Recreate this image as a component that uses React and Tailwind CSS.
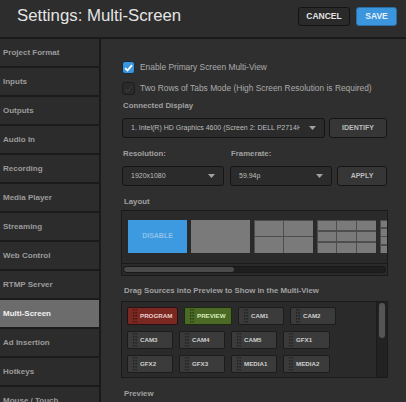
import React from "react";

const F = { fontFamily: '"Liberation Sans", Arial, sans-serif' };

const sideItems = [
  "Project Format",
  "Inputs",
  "Outputs",
  "Audio In",
  "Recording",
  "Media Player",
  "Streaming",
  "Web Control",
  "RTMP Server",
  "Multi-Screen",
  "Ad Insertion",
  "Hotkeys",
  "Mouse / Touch",
];

function Arrow() {
  return (
    <svg width="7" height="4" viewBox="0 0 7 4" className="shrink-0">
      <path d="M0 0 L7 0 L3.5 4 Z" fill="#a0a0a0" />
    </svg>
  );
}

function Handle() {
  const dots = [];
  for (let r = 0; r < 5; r++) {
    for (let c = 0; c < 2; c++) {
      dots.push(<rect key={r + "-" + c} x={c * 2.5} y={r * 3} width="1.3" height="1.6" fill="rgba(0,0,0,0.45)" />);
    }
  }
  return (
    <svg width="4" height="14" viewBox="0 0 4 14" className="shrink-0">
      {dots}
    </svg>
  );
}

function Src({ label, w, kind }) {
  let cls = "bg-[#3b3b3b] border-[#1c1c1c] text-[#cfcfcf]";
  if (kind === "red") cls = "bg-[#7b2822] border-[#2a1010] text-[#ecd0cc]";
  if (kind === "green") cls = "bg-[#4a6a26] border-[#1c2a10] text-[#d6ebb8]";
  return (
    <div className={`h-[18px] ${w} shrink-0 border rounded-[2px] flex items-center pl-[5px] gap-[3px] ${cls}`}>
      <Handle />
      <span className="text-[6.2px] font-bold leading-none">{label}</span>
    </div>
  );
}

function Grid({ n }) {
  const cells = [];
  for (let i = 0; i < n * n; i++) cells.push(<div key={i} className="bg-[#7a7a7a]" />);
  return (
    <div
      className="w-[59px] h-[33px] shrink-0 bg-[#4e4e4e] grid gap-[1.5px] p-[0.5px]"
      style={{ gridTemplateColumns: `repeat(${n}, 1fr)`, gridTemplateRows: `repeat(${n}, 1fr)` }}
    >
      {cells}
    </div>
  );
}

export default function App() {
  return (
    <div className="w-[406px] h-[402px] overflow-hidden bg-[#2f2f2f] flex flex-col" style={F}>
      {/* Header */}
      <div className="h-[39px] shrink-0 bg-[#2d2d2d] border-b-2 border-[#1a1a1a] flex items-center pl-[17px] pr-[9px]">
        <div className="text-[16.8px] text-[#e4e4e4] leading-none flex-1 pb-[4px]">Settings: Multi-Screen</div>
        <div className="flex gap-[6px] pb-[5px]">
          <div className="w-[52px] h-[19px] rounded-[3px] border-[1.5px] border-[#141414] bg-[#2a2a2a] flex items-center justify-center text-[8.5px] font-bold text-[#e2e2e2]">
            CANCEL
          </div>
          <div className="w-[41px] h-[19px] rounded-[3px] border border-[#2b6ea6] bg-[#3b96dd] flex items-center justify-center text-[8.5px] font-bold text-[#e6f1fb]">
            SAVE
          </div>
        </div>
      </div>

      <div className="flex flex-1 min-h-0">
        {/* Sidebar */}
        <div className="w-[101px] shrink-0 border-r-2 border-[#1a1a1a] bg-[#1b1b1b] flex flex-col">
          {sideItems.map((s) => {
            const active = s === "Multi-Screen";
            return (
              <div
                key={s}
                className={`h-[29px] shrink-0 border-b-2 border-[#1b1b1b] flex items-center pl-[3px] text-[8px] font-bold ${
                  active ? "bg-[#6c6c6c] text-[#f2f2f2]" : "bg-[#2c2c2c] text-[#9b9b9b]"
                }`}
              >
                {s}
              </div>
            );
          })}
        </div>

        {/* Main */}
        <div className="flex-1 min-w-0 pl-[20px] pr-[18px] flex flex-col">
          <div className="mt-[22px] h-[13px] flex items-center gap-[5px] pl-[1px]">
            <div className="w-[13px] h-[13px] rounded-[3px] bg-[#3b96dd] border border-[#152a3c] flex items-center justify-center">
              <svg width="9" height="8" viewBox="0 0 9 8">
                <path d="M1 4.2 L3.5 6.5 L8 1.2" stroke="#ffffff" strokeWidth="1.8" fill="none" />
              </svg>
            </div>
            <span className="text-[8.4px] text-[#ababab] leading-none">Enable Primary Screen Multi-View</span>
          </div>
          <div className="mt-[8px] h-[13px] flex items-center gap-[5px] pl-[1px]">
            <div className="w-[13px] h-[13px] rounded-[3px] bg-[#2a2a2a] border border-[#1c1c1c] flex items-center justify-center">
              <svg width="9" height="8" viewBox="0 0 9 8">
                <path d="M1 4.2 L3.5 6.5 L8 1.2" stroke="#353535" strokeWidth="1.6" fill="none" />
              </svg>
            </div>
            <span className="text-[8.4px] text-[#ababab] leading-none">Two Rows of Tabs Mode (High Screen Resolution is Required)</span>
          </div>

          <div className="mt-[5px] h-[12px] flex items-center pl-[2px] text-[7.8px] font-bold text-[#a0a0a0]">Connected Display</div>
          <div className="mt-[6px] h-[20px] flex gap-[4px] pl-[1px]">
            <div className="w-[203px] h-[20px] rounded-[3px] border border-[#141414] bg-[#2b2b2b] flex items-center pl-[8px] pr-[8px]">
              <span className="flex-1 min-w-0 overflow-hidden whitespace-nowrap text-[7px] text-[#bdbdbd] mr-[9px]">
                1. Intel(R) HD Graphics 4600 (Screen 2: DELL P2714H)
              </span>
              <Arrow />
            </div>
            <div className="w-[58px] h-[20px] rounded-[3px] border border-[#141414] bg-[#363636] flex items-center justify-center text-[7px] font-bold text-[#bcbcbc]">
              IDENTIFY
            </div>
          </div>

          <div className="mt-[10px] h-[12px] flex items-center pl-[2px] text-[7.8px] font-bold text-[#a0a0a0]">
            <span className="w-[108px]">Resolution:</span>
            <span>Framerate:</span>
          </div>
          <div className="mt-[6px] h-[20px] flex pl-[1px]">
            <div className="w-[102px] h-[20px] rounded-[3px] border border-[#141414] bg-[#2b2b2b] flex items-center pl-[8px] pr-[8px]">
              <span className="flex-1 text-[7px] text-[#bdbdbd]">1920x1080</span>
              <Arrow />
            </div>
            <div className="ml-[6px] w-[102px] h-[20px] rounded-[3px] border border-[#141414] bg-[#2b2b2b] flex items-center pl-[8px] pr-[8px]">
              <span className="flex-1 text-[7px] text-[#bdbdbd]">59.94p</span>
              <Arrow />
            </div>
            <div className="ml-[5px] w-[50px] h-[20px] rounded-[3px] border border-[#141414] bg-[#363636] flex items-center justify-center text-[7px] font-bold text-[#bcbcbc]">
              APPLY
            </div>
          </div>

          <div className="mt-[10px] h-[12px] flex items-center pl-[3px] text-[7.8px] font-bold text-[#a0a0a0]">Layout</div>
          <div className="mt-[2px] w-[267px] h-[66px] shrink-0 border border-[#1a1a1a] bg-[#2a2a2a] flex flex-col">
            <div className="h-[52px] shrink-0 overflow-hidden pt-[9px] pl-[6px] flex gap-[4px]">
              <div className="w-[59px] h-[33px] shrink-0 bg-[#3d9ae0] flex items-center justify-center text-[7px] font-bold text-[#8fc2ea]">
                DISABLE
              </div>
              <div className="w-[59px] h-[33px] shrink-0 bg-[#7a7a7a]" />
              <Grid n={2} />
              <Grid n={3} />
              <Grid n={4} />
            </div>
            <div className="h-[12px] shrink-0 border-t border-[#1a1a1a] pt-[2px] px-[1px]">
              <div className="h-[7px] rounded-full bg-[#1e1e1e] border border-[#181818] relative overflow-hidden">
                <div className="h-full w-[110px] rounded-full bg-[#4a4a4a]" />
              </div>
            </div>
          </div>

          <div className="mt-[9px] h-[12px] flex items-center pl-[3px] text-[7.8px] font-bold text-[#a0a0a0]">
            Drag Sources into Preview to Show in the Multi-View
          </div>
          <div className="mt-[4px] w-[267px] h-[77px] shrink-0 border border-[#1a1a1a] bg-[#2a2a2a] flex">
            <div className="flex-1 pl-[5px] pt-[5px] flex flex-col gap-[6px]">
              <div className="flex gap-[6px]">
                <Src label="PROGRAM" w="w-[51px]" kind="red" />
                <Src label="PREVIEW" w="w-[48px]" kind="green" />
                <Src label="CAM1" w="w-[46px]" />
                <Src label="CAM2" w="w-[46px]" />
              </div>
              <div className="flex gap-[6px]">
                <Src label="CAM3" w="w-[46px]" />
                <Src label="CAM4" w="w-[46px]" />
                <Src label="CAM5" w="w-[46px]" />
                <Src label="GFX1" w="w-[47px]" />
              </div>
              <div className="flex gap-[6px]">
                <Src label="GFX2" w="w-[46px]" />
                <Src label="GFX3" w="w-[46px]" />
                <Src label="MEDIA1" w="w-[46px]" />
                <Src label="MEDIA2" w="w-[47px]" />
              </div>
            </div>
            <div className="w-[11px] shrink-0 border-l border-[#1a1a1a] bg-[#222222] py-[1px] px-[2px]">
              <div className="h-[35px] rounded-full bg-[#555555]" />
            </div>
          </div>

          <div className="mt-[10px] h-[12px] flex items-center pl-[3px] text-[7.8px] font-bold text-[#a0a0a0]">Preview</div>
        </div>
      </div>
    </div>
  );
}
